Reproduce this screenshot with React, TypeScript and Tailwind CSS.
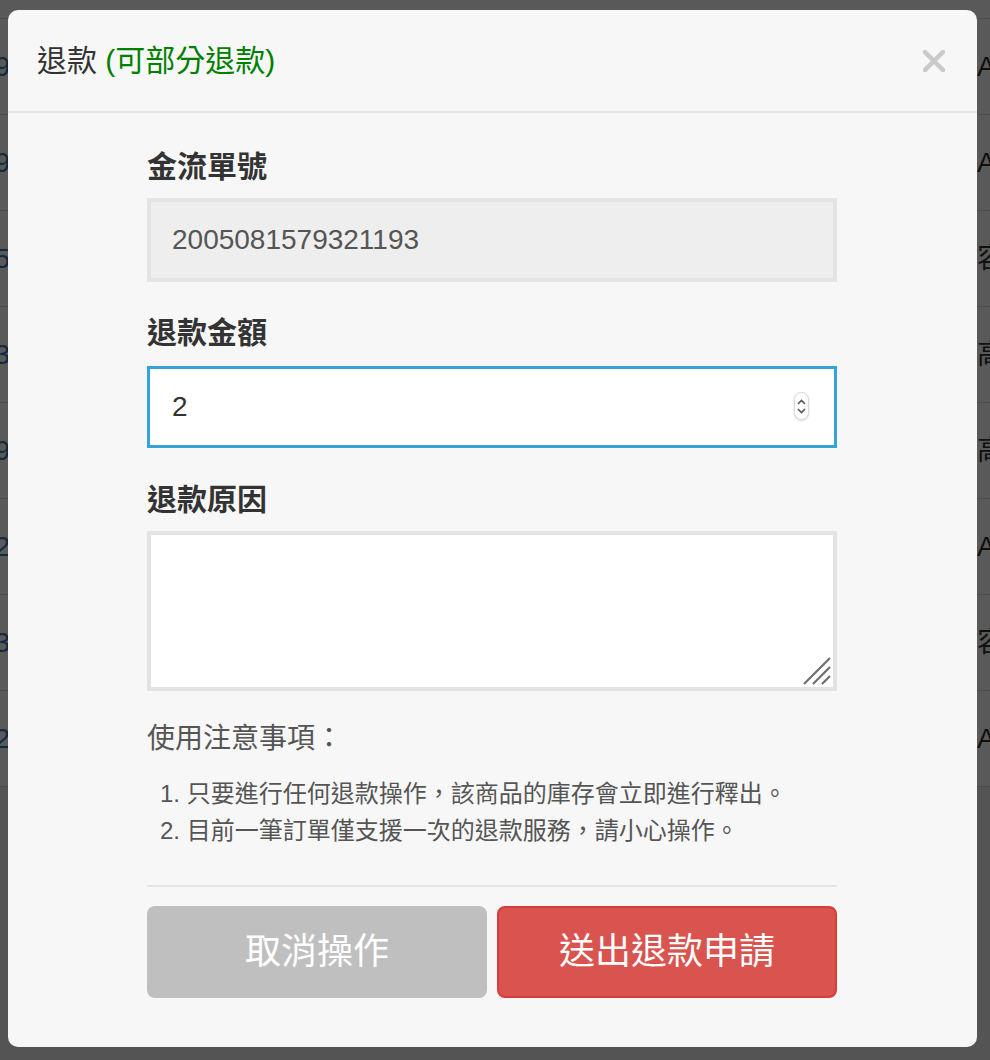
import React from 'react';

const rows = [
  { id: '…2005081579', tail: 'ATM' },
  { id: '…2005081579', tail: 'ATM' },
  { id: '…2005081575', tail: '容易' },
  { id: '…2005081573', tail: '高雄' },
  { id: '…2005081579', tail: '高雄' },
  { id: '…2005081572', tail: 'ATM' },
  { id: '…2005081573', tail: '容易' },
  { id: '…2005081572', tail: 'ATM' },
];

const font = 'font-["Liberation_Sans","Noto_Sans_CJK_TC",sans-serif]';

const App: React.FC = () => {
  return (
    <div className={`relative w-[990px] h-[1060px] overflow-hidden bg-[#f1f1f1] ${font}`}>
      {/* page behind the dialog */}
      <div className="pt-[18px] bg-white border-b border-[#dddddd]">
        {rows.map((r, i) => (
          <div key={i} className="flex items-center justify-between h-[96px] border-t border-[#dddddd]">
            <div className="w-[10px] flex justify-end">
              <span className="whitespace-nowrap text-[28px] text-[#337ab7]">{r.id}</span>
            </div>
            <div className="w-[13px] overflow-visible">
              <span className="whitespace-nowrap text-[28px] text-[#333333]">{r.tail}</span>
            </div>
          </div>
        ))}
      </div>

      {/* backdrop */}
      <div className="absolute inset-0 bg-black/65" />

      {/* dialog */}
      <div className="absolute left-[8px] top-[10px] w-[969px] h-[1037px] rounded-[10px] bg-[#f7f7f7]">
        <div className="flex items-center justify-between h-[103px] pl-[29px] pr-[32px] border-b-2 border-[#e5e5e5]">
          <h2 className="text-[30px] text-[#333333]">
            退款 <span className="text-[#008000]">(可部分退款)</span>
          </h2>
          <svg width="22" height="22" viewBox="0 0 22 22">
            <path d="M2 2L20 20M20 2L2 20" stroke="#c9c9c9" strokeWidth="4.5" strokeLinecap="square" />
          </svg>
        </div>

        <div className="pl-[139px] pr-[140px] pt-[34px]">
          <div className="text-[30px] leading-[40px] font-bold text-[#333333] mb-[11px]">金流單號</div>
          <div className="h-[84px] border-4 border-[#e3e3e3] bg-[#eeeeee] flex items-center pl-[21px] text-[28px] text-[#555555]">
            2005081579321193
          </div>

          <div className="mt-[31px] text-[30px] leading-[40px] font-bold text-[#333333] mb-[13px]">退款金額</div>
          <div className="relative h-[82px] border-[3px] border-[#35a3d8] bg-white flex items-center pl-[22px] text-[28px] text-[#333333]">
            2
            <div className="absolute right-[25px] top-[23px] w-[15px] h-[28px] rounded-full border border-[#d8d8d8] bg-white shadow-[0_1px_2px_rgba(0,0,0,0.15)] flex flex-col items-center justify-center gap-[3px]">
              <svg width="9" height="6" viewBox="0 0 9 6">
                <path d="M1 5L4.5 1.5L8 5" fill="none" stroke="#555" strokeWidth="1.6" />
              </svg>
              <svg width="9" height="6" viewBox="0 0 9 6">
                <path d="M1 1L4.5 4.5L8 1" fill="none" stroke="#555" strokeWidth="1.6" />
              </svg>
            </div>
          </div>

          <div className="mt-[32px] text-[30px] leading-[40px] font-bold text-[#333333] mb-[11px]">退款原因</div>
          <div className="relative h-[160px] border-4 border-[#e3e3e3] bg-white">
            <textarea className="w-full h-full resize-none outline-none bg-transparent" />
            <svg className="absolute right-[2px] bottom-[2px]" width="28" height="28" viewBox="0 0 28 28">
              <path d="M27 1L1 27M27 10L10 27M27 19L19 27" stroke="#6f6f6f" strokeWidth="2.2" />
            </svg>
          </div>

          <div className="mt-[28px] text-[28px] leading-[40px] text-[#555555]">使用注意事項：</div>
          <ol className="mt-[16px] pl-[13px] text-[24px] leading-[37px] text-[#555555]">
            <li>1. 只要進行任何退款操作，該商品的庫存會立即進行釋出。</li>
            <li>2. 目前一筆訂單僅支援一次的退款服務，請小心操作。</li>
          </ol>

          <div className="mt-[36px] border-t-2 border-[#e5e5e5]" />

          <div className="mt-[19px] flex gap-[10px]">
            <button className="w-[340px] shrink-0 h-[92px] rounded-[8px] bg-[#bfbfbf] text-white text-[36px]">取消操作</button>
            <button className="w-[340px] shrink-0 h-[92px] rounded-[8px] bg-[#d9534f] border-2 border-[#d43f3a] text-white text-[36px]">
              送出退款申請
            </button>
          </div>
        </div>
      </div>
    </div>
  );
};

export default App;
